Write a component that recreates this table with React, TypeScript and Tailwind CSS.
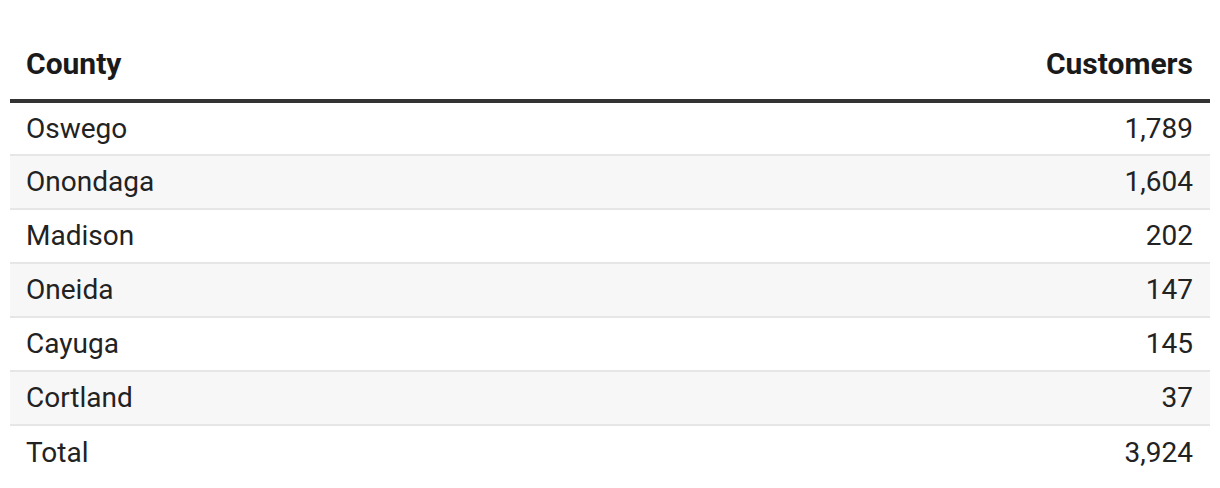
const rows: [string, string][] = [
  ['Oswego', '1,789'],
  ['Onondaga', '1,604'],
  ['Madison', '202'],
  ['Oneida', '147'],
  ['Cayuga', '145'],
  ['Cortland', '37'],
];

export default function App() {
  return (
    <div className="bg-white px-[10px] pt-[28px] font-['Roboto',sans-serif] text-[28px] text-[#222]">
      <table className="w-full border-collapse">
        <thead>
          <tr className="border-b-4 border-[#333]">
            <th className="pl-[16px] pr-[17px] pt-[18px] pb-[18px] text-left text-[30px] leading-[35px] font-bold text-[#1a1a1a]">
              County
            </th>
            <th className="pl-[16px] pr-[17px] pt-[18px] pb-[18px] text-right text-[30px] leading-[35px] font-bold text-[#1a1a1a]">
              Customers
            </th>
          </tr>
        </thead>
        <tbody>
          {rows.map(([county, n], i) => (
            <tr
              key={county}
              className={`h-[54px] border-b-2 border-[#e6e6e6] ${i % 2 === 1 ? 'bg-[#f7f7f7]' : 'bg-white'}`}
            >
              <td className="pl-[16px] pr-[17px] text-left">{county}</td>
              <td className="pl-[16px] pr-[17px] text-right">{n}</td>
            </tr>
          ))}
          <tr className="h-[54px]">
            <td className="pl-[16px] pr-[17px] text-left">Total</td>
            <td className="pl-[16px] pr-[17px] text-right">3,924</td>
          </tr>
        </tbody>
      </table>
    </div>
  );
}
